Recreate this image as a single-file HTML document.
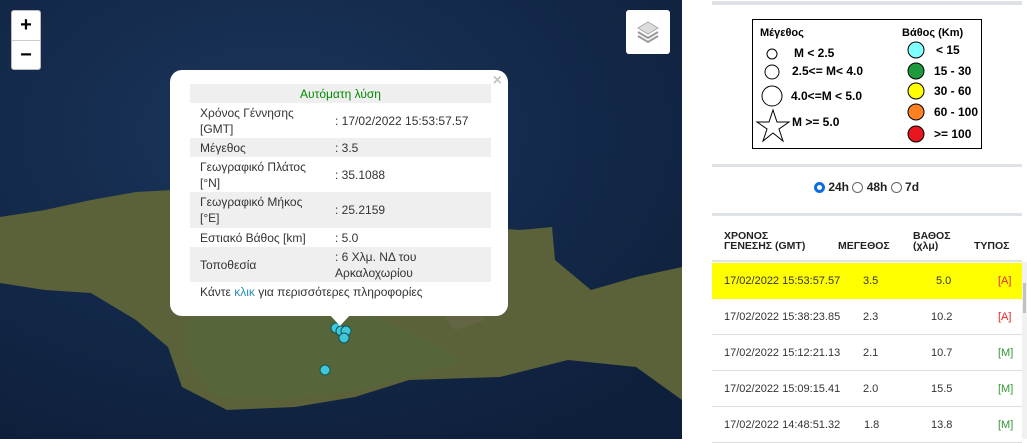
<!DOCTYPE html>
<html><head><meta charset="utf-8"><style>
*{margin:0;padding:0;box-sizing:border-box}
body{width:1027px;height:439px;overflow:hidden;background:#fff;font-family:"Liberation Sans",sans-serif;position:relative}
#map{position:absolute;left:0;top:0;width:682px;height:439px;background:#132644;overflow:hidden}
.btn{position:absolute;background:#fff;border-radius:3px}
.pop{position:absolute;left:170px;top:70px;width:338px;height:246px;background:#fff;border-radius:12px;font-size:12px;color:#333}
.pop table{position:absolute;left:20px;top:14px;width:301px;border-collapse:collapse}
.pop td{padding:0 0 0 10px;line-height:16px;vertical-align:middle}
.g{background:#efefef}
.tbl{position:absolute;left:712px;top:214px;width:310px;font-family:"Liberation Sans",sans-serif}
.row{position:absolute;left:0;width:310px;height:36px;border-bottom:1px solid #ddd;font-size:11px;color:#333}
.row span{position:absolute;top:12px}
</style></head><body>
<div id="map">
<svg width="682" height="439" style="position:absolute;left:0;top:0">
<defs><radialGradient id="s" cx="40%" cy="30%" r="80%"><stop offset="0" stop-color="#1a355b"/><stop offset="1" stop-color="#0e1f3b"/></radialGradient></defs>
<rect width="682" height="439" fill="url(#s)"/>
<polygon points="0,217 45,210 91,200 136,192 173,190 260,200 350,215 450,225 520,230 552,227 555,260 591,290 636,277 682,267 682,400 636,367 568,360 500,377 409,380 355,397 295,407 227,410 182,387 168,347 136,320 91,293 45,290 0,283" fill="#5b6239"/>
<polygon points="185,320 260,300 340,305 420,335 460,360 420,375 355,390 280,400 215,395 190,360" fill="#55683a" opacity=".7"/>
<polygon points="440,265 470,272 485,320 455,330 432,300" fill="#6e6852" opacity=".5"/>
<g fill="#40c8da" stroke="#155" stroke-width="1">
<circle cx="336" cy="328" r="5"/><circle cx="341" cy="331" r="5"/><circle cx="346" cy="331" r="5"/><circle cx="344" cy="338" r="5"/><circle cx="325" cy="370" r="5"/></g>
</svg>
<div class="btn" style="left:11px;top:10px;width:30px;height:60px;border:1px solid #bbb">
<div style="height:30px;border-bottom:1px solid #ccc;text-align:center;font:bold 20px/29px 'Liberation Sans'">+</div>
<div style="text-align:center;font:bold 20px/28px 'Liberation Sans'">−</div></div>
<div class="btn" style="left:626px;top:10px;width:44px;height:44px">
<svg width="44" height="44"><polygon points="22,12 32,18 22,24 12,18" fill="#ddd" stroke="#aaa"/><path d="M12,22 L22,28 L32,22 M12,26 L22,32 L32,26" fill="none" stroke="#999" stroke-width="2"/></svg></div>
<div class="pop">
<span style="position:absolute;right:6px;top:2px;color:#c3c3c3;font:bold 16px 'Liberation Sans'">×</span>
<table>
<tr class="g"><td colspan="2" style="text-align:center;color:#080;height:19px;padding:0">Αυτόματη λύση</td></tr>
<tr><td style="height:35px;width:135px">Χρόνος Γέννησης<br>[GMT]</td><td>: 17/02/2022 15:53:57.57</td></tr>
<tr class="g"><td style="height:19px">Μέγεθος</td><td>: 3.5</td></tr>
<tr><td style="height:35px">Γεωγραφικό Πλάτος<br>[°N]</td><td>: 35.1088</td></tr>
<tr class="g"><td style="height:36px">Γεωγραφικό Μήκος<br>[°E]</td><td>: 25.2159</td></tr>
<tr><td style="height:19px">Εστιακό Βάθος [km]</td><td>: 5.0</td></tr>
<tr class="g"><td style="height:35px">Τοποθεσία</td><td>: 6 Χλμ. ΝΔ του<br>Αρκαλοχωρίου</td></tr>
<tr><td colspan="2" style="height:20px">Κάντε <span style="color:#2a8fbd">κλικ</span> για περισσότερες πληροφορίες</td></tr>
</table>
<div style="position:absolute;left:160px;top:245px;width:0;height:0;border-left:10px solid transparent;border-right:10px solid transparent;border-top:11px solid #fff"></div>
</div>
</div>
<div style="position:absolute;left:712px;top:1px;width:310px;height:4px;background:#dee2e6"></div>
<div style="position:absolute;left:752px;top:19px;width:230px;height:130px;border:1px solid #000;color:#000">
<svg width="230" height="130" style="position:absolute;left:-1px;top:-1px" font-family="Liberation Sans" font-weight="bold" font-size="12">
<text x="8" y="17" font-size="11">Μέγεθος</text><text x="150" y="17" font-size="11">Βάθος (Km)</text>
<circle cx="20" cy="35" r="5" fill="none" stroke="#000"/><text x="42" y="38">M &lt; 2.5</text>
<circle cx="20" cy="53" r="7" fill="none" stroke="#000"/><text x="40" y="56">2.5&lt;= M&lt; 4.0</text>
<circle cx="20" cy="77" r="10" fill="none" stroke="#000"/><text x="39" y="81">4.0&lt;=M &lt; 5.0</text>
<polygon points="21,91 25,103 37,103 27,110 31,122 21,114 11,122 15,110 5,103 17,103" fill="none" stroke="#000"/><text x="40" y="107">M &gt;= 5.0</text>
<g stroke="#000"><circle cx="164" cy="31" r="8" fill="#80ffff"/><circle cx="164" cy="52" r="8" fill="#1d9a3c"/><circle cx="164" cy="72" r="8" fill="#ffff00"/><circle cx="164" cy="93" r="8" fill="#ff8020"/><circle cx="164" cy="115" r="8" fill="#e8141e"/></g>
<text x="184" y="35">&lt; 15</text><text x="182" y="56">15 - 30</text><text x="182" y="76">30 - 60</text><text x="182" y="97">60 - 100</text><text x="182" y="119">&gt;= 100</text>
</svg></div>
<div style="position:absolute;left:712px;top:164px;width:310px;height:3px;background:#dee2e6"></div>
<div style="position:absolute;left:814px;top:180px;font:bold 12px 'Liberation Sans';color:#222;white-space:nowrap">
<span style="display:inline-block;width:11px;height:11px;border-radius:50%;border:3px solid #0a6de6;vertical-align:-2px"></span> 24h <span style="display:inline-block;width:11px;height:11px;border-radius:50%;border:1px solid #666;vertical-align:-2px"></span> 48h <span style="display:inline-block;width:11px;height:11px;border-radius:50%;border:1px solid #666;vertical-align:-2px"></span> 7d</div>
<div style="position:absolute;left:712px;top:213px;width:310px;height:3px;background:#dee2e6"></div>
<div class="tbl">
<div style="position:absolute;top:0;width:310px;height:48px;border-bottom:2px solid #dee2e6;font:bold 10.5px/10px 'Liberation Sans';color:#222">
<span style="position:absolute;left:12px;top:17px">ΧΡΟΝΟΣ<br>ΓΕΝΕΣΗΣ (GMT)</span>
<span style="position:absolute;left:126px;top:27px">ΜΕΓΕΘΟΣ</span>
<span style="position:absolute;left:201px;top:17px">ΒΑΘΟΣ<br>(χλμ)</span>
<span style="position:absolute;left:262px;top:27px">ΤΥΠΟΣ</span></div>
<div class="row" style="top:49px;background:#ffff00;border:0"><span style="left:12px">17/02/2022 15:53:57.57</span><span style="left:151px">3.5</span><span style="left:224px">5.0</span><span style="left:286px;color:#e22">[A]</span></div>
<div class="row" style="top:85px"><span style="left:12px">17/02/2022 15:38:23.85</span><span style="left:151px">2.3</span><span style="left:219px">10.2</span><span style="left:286px;color:#e22">[A]</span></div>
<div class="row" style="top:121px"><span style="left:12px">17/02/2022 15:12:21.13</span><span style="left:151px">2.1</span><span style="left:219px">10.7</span><span style="left:286px;color:#393">[M]</span></div>
<div class="row" style="top:157px"><span style="left:12px">17/02/2022 15:09:15.41</span><span style="left:151px">2.0</span><span style="left:219px">15.5</span><span style="left:286px;color:#393">[M]</span></div>
<div class="row" style="top:193px"><span style="left:12px">17/02/2022 14:48:51.32</span><span style="left:152px">1.8</span><span style="left:219px">13.8</span><span style="left:286px;color:#393">[M]</span></div>
</div>
<div style="position:absolute;left:1022px;top:262px;width:5px;height:177px;background:#f1f1f1"></div>
<div style="position:absolute;left:1023px;top:283px;width:3px;height:30px;background:#c1c1c1"></div>
</body></html>
